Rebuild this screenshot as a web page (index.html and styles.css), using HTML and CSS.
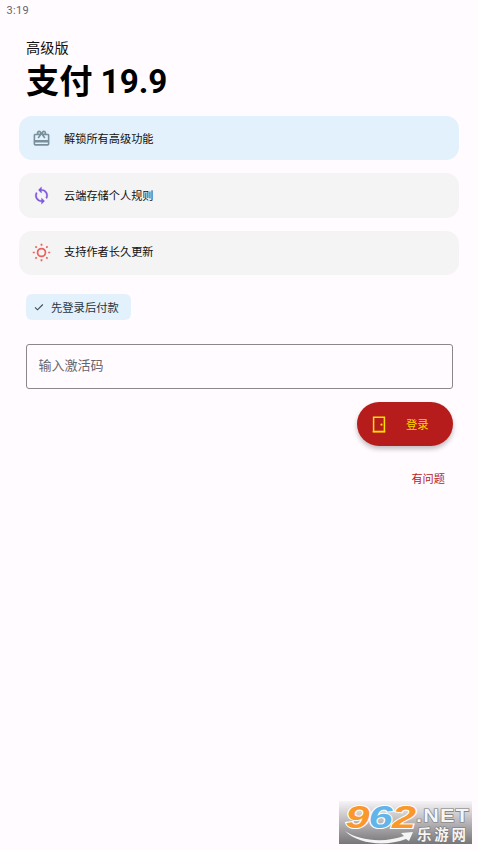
FILE: index.html
```html
<!DOCTYPE html>
<html lang="zh-CN">
<head>
<meta charset="utf-8">
<title>高级版</title>
<link rel="stylesheet" href="styles.css">
</head>
<body>
<div class="status">3:19</div>
<main class="page">
  <header class="header">
    <div class="subtitle">高级版</div>
    <h1 class="title">支付 19.9</h1>
  </header>
  <div class="features">
    <div class="card card-active">
      <svg class="icon gift" viewBox="0 0 24 24"><path d="M20 6h-2.18c.11-.31.18-.65.18-1a2.996 2.996 0 0 0-5.5-1.65l-.5.67-.5-.68C10.96 2.54 10.05 2 9 2 7.34 2 6 3.34 6 5c0 .35.07.69.18 1H4c-1.11 0-1.99.89-1.99 2L2 19c0 1.11.89 2 2 2h16c1.11 0 2-.89 2-2V8c0-1.11-.89-2-2-2zm-5-2c.55 0 1 .45 1 1s-.45 1-1 1-1-.45-1-1 .45-1 1-1zM9 4c.55 0 1 .45 1 1s-.45 1-1 1-1-.45-1-1 .45-1 1-1zm11 15H4v-2h16v2zm0-5H4V8h5.080L7 10.830 8.620 12 12 7.400l3.380 4.600L17 10.830 14.920 8H20v6z"/></svg>
      <span>解锁所有高级功能</span>
    </div>
    <div class="card">
      <svg class="icon sync" viewBox="0 0 24 24"><path d="M12 4V1L8 5l4 4V6c3.310 0 6 2.690 6 6 0 1.010-.25 1.970-.7 2.800l1.460 1.460C19.540 15.030 20 13.570 20 12c0-4.420-3.580-8-8-8zm0 14c-3.310 0-6-2.690-6-6 0-1.010.25-1.970.7-2.800L5.240 7.740C4.460 8.970 4 10.430 4 12c0 4.420 3.580 8 8 8v3l4-4-4-4v3z"/></svg>
      <span>云端存储个人规则</span>
    </div>
    <div class="card card-last">
      <svg class="icon sun" viewBox="0 0 24 24"><circle cx="12" cy="12" r="5"/><path d="M12 1v2.500M12 20.500V23M1 12h2.500M20.500 12H23M4.300 4.300l1.700 1.700M18 18l1.700 1.700M4.300 19.700L6 18M18 6l1.700-1.700"/></svg>
      <span>支持作者长久更新</span>
    </div>
  </div>
  <div class="chip">
    <svg class="check" viewBox="0 0 12 12"><path d="M2 6.300l2.500 2.500 5.300-5.300"/></svg>
    <span>先登录后付款</span>
  </div>
  <div class="field">输入激活码</div>
  <div class="actions">
    <button class="login">
      <svg class="door" viewBox="0 0 14 17"><path d="M1.600 15.500V1.300h10.800v14.200z"/><path d="M.7 15.700h12.600"/><circle cx="9.500" cy="8.700" r="1.100"/></svg>
      <span>登录</span>
    </button>
    <a class="help">有问题</a>
  </div>
</main>
<svg class="watermark" viewBox="0 0 133 43">
  <defs>
    <linearGradient id="bg" x2="0" y2="1"><stop offset="0" stop-color="#f6f4f7"/><stop offset=".45" stop-color="#bdbbbd"/><stop offset="1" stop-color="#777577"/></linearGradient>
  </defs>
  <rect width="133" height="43" fill="url(#bg)"/>
  <path class="swoosh" d="M6 30C20 40 46 42 65 35l-3-3 12-1-4 9-3-2C46 46 19 43 6 30z"/>
  <g class="digits">
    <text x="6.500" y="27" textLength="24" lengthAdjust="spacingAndGlyphs" fill="#fb982c">9</text>
    <text x="29.500" y="27" textLength="24" lengthAdjust="spacingAndGlyphs" fill="#62b5e8">6</text>
    <text x="53" y="27" textLength="24" lengthAdjust="spacingAndGlyphs" fill="#fb982c">2</text>
  </g>
  <text class="net" x="77" y="21" textLength="54" lengthAdjust="spacingAndGlyphs">.NET</text>
  <text class="site" x="78" y="38.500">乐游网</text>
</svg>
</body>
</html>
```
FILE: styles.css
```css
* { box-sizing: border-box; }
body {
  margin: 0;
  height: 850px;
  overflow: hidden;
  position: relative;
  background: #fffbff;
  color: #111;
  font-family: Roboto, "Noto Sans CJK SC", sans-serif;
}
.status {
  height: 20px;
  padding-left: 6.500px;
  font-size: 11px;
  line-height: 21px;
  letter-spacing: .3px;
  color: #66646a;
}
.page { padding: 0 19px; }
.header { height: 96px; padding: 18px 7px 0; }
.subtitle { font-size: 14.200px; line-height: 20px; }
.title {
  margin: 0;
  font-size: 33.200px;
  line-height: 48px;
  font-weight: 700;
  color: #000;
}
.features { display: flex; flex-direction: column; gap: 13px; }
.card {
  height: 44.300px;
  display: flex;
  align-items: center;
  gap: 13px;
  padding-left: 13px;
  border-radius: 13px;
  background: #f4f4f4;
  font-size: 11.200px;
}
.card-active { background: #e2f1fc; }
.card-last { padding-bottom: 3px; }
.icon { width: 19px; height: 19px; flex: none; }
.gift { fill: #78909c; }
.sync { fill: #7e57dc; stroke: #7e57dc; stroke-width: .3; }
.sun { margin-top: 2px; fill: none; stroke: #ec5f5c; stroke-width: 2.200; }
.chip {
  width: 105px;
  height: 26px;
  margin: 19px 0 0 7px;
  padding-left: 7px;
  display: flex;
  align-items: center;
  gap: 6px;
  border-radius: 6px;
  background: #e2f1fc;
  color: #29333d;
  font-size: 11.300px;
}
.check { width: 12px; height: 12px; fill: none; stroke: #3c4a54; stroke-width: 1.100; }
.field {
  height: 45px;
  margin: 24px 6px 0 6.500px;
  padding-left: 12px;
  border: 1px solid #8a888c;
  border-radius: 3px;
  color: #67656a;
  font-size: 13px;
  line-height: 42px;
}
.actions {
  display: flex;
  flex-direction: column;
  align-items: flex-end;
  padding: 13px 6.500px 0 0;
}
.login {
  width: 95.500px;
  height: 44.500px;
  padding: 0 0 0 15px;
  display: flex;
  align-items: center;
  gap: 20px;
  border: 0;
  border-radius: 23px;
  background: #b71c1c;
  box-shadow: 0 3px 5px rgba(0, 0, 0, .25);
  color: #ffd500;
  font: 400 11.300px Roboto, "Noto Sans CJK SC", sans-serif;
}
.door { width: 14px; height: 17px; fill: none; stroke: #ffe000; stroke-width: 1.500; }
.door circle { fill: #ffe000; stroke: none; }
.help { margin: 26px 7.500px 0 0; font-size: 11.200px; line-height: 16px; color: #b92323; }
.watermark { position: absolute; left: 339px; top: 801px; width: 133px; height: 43px; }
.digits {
  font: italic 700 32px "Liberation Sans", sans-serif;
  stroke: #fff;
  stroke-width: 2;
  paint-order: stroke;
}
.swoosh { fill: #f5f5f5; }
.net, .site { fill: #f5f5f5; stroke: #777; stroke-width: 1.200; paint-order: stroke; }
.net { font: 700 18px "Liberation Sans", sans-serif; letter-spacing: 1px; }
.site { font: 700 14.500px "Noto Sans CJK SC", sans-serif; letter-spacing: 2.800px; }
```
